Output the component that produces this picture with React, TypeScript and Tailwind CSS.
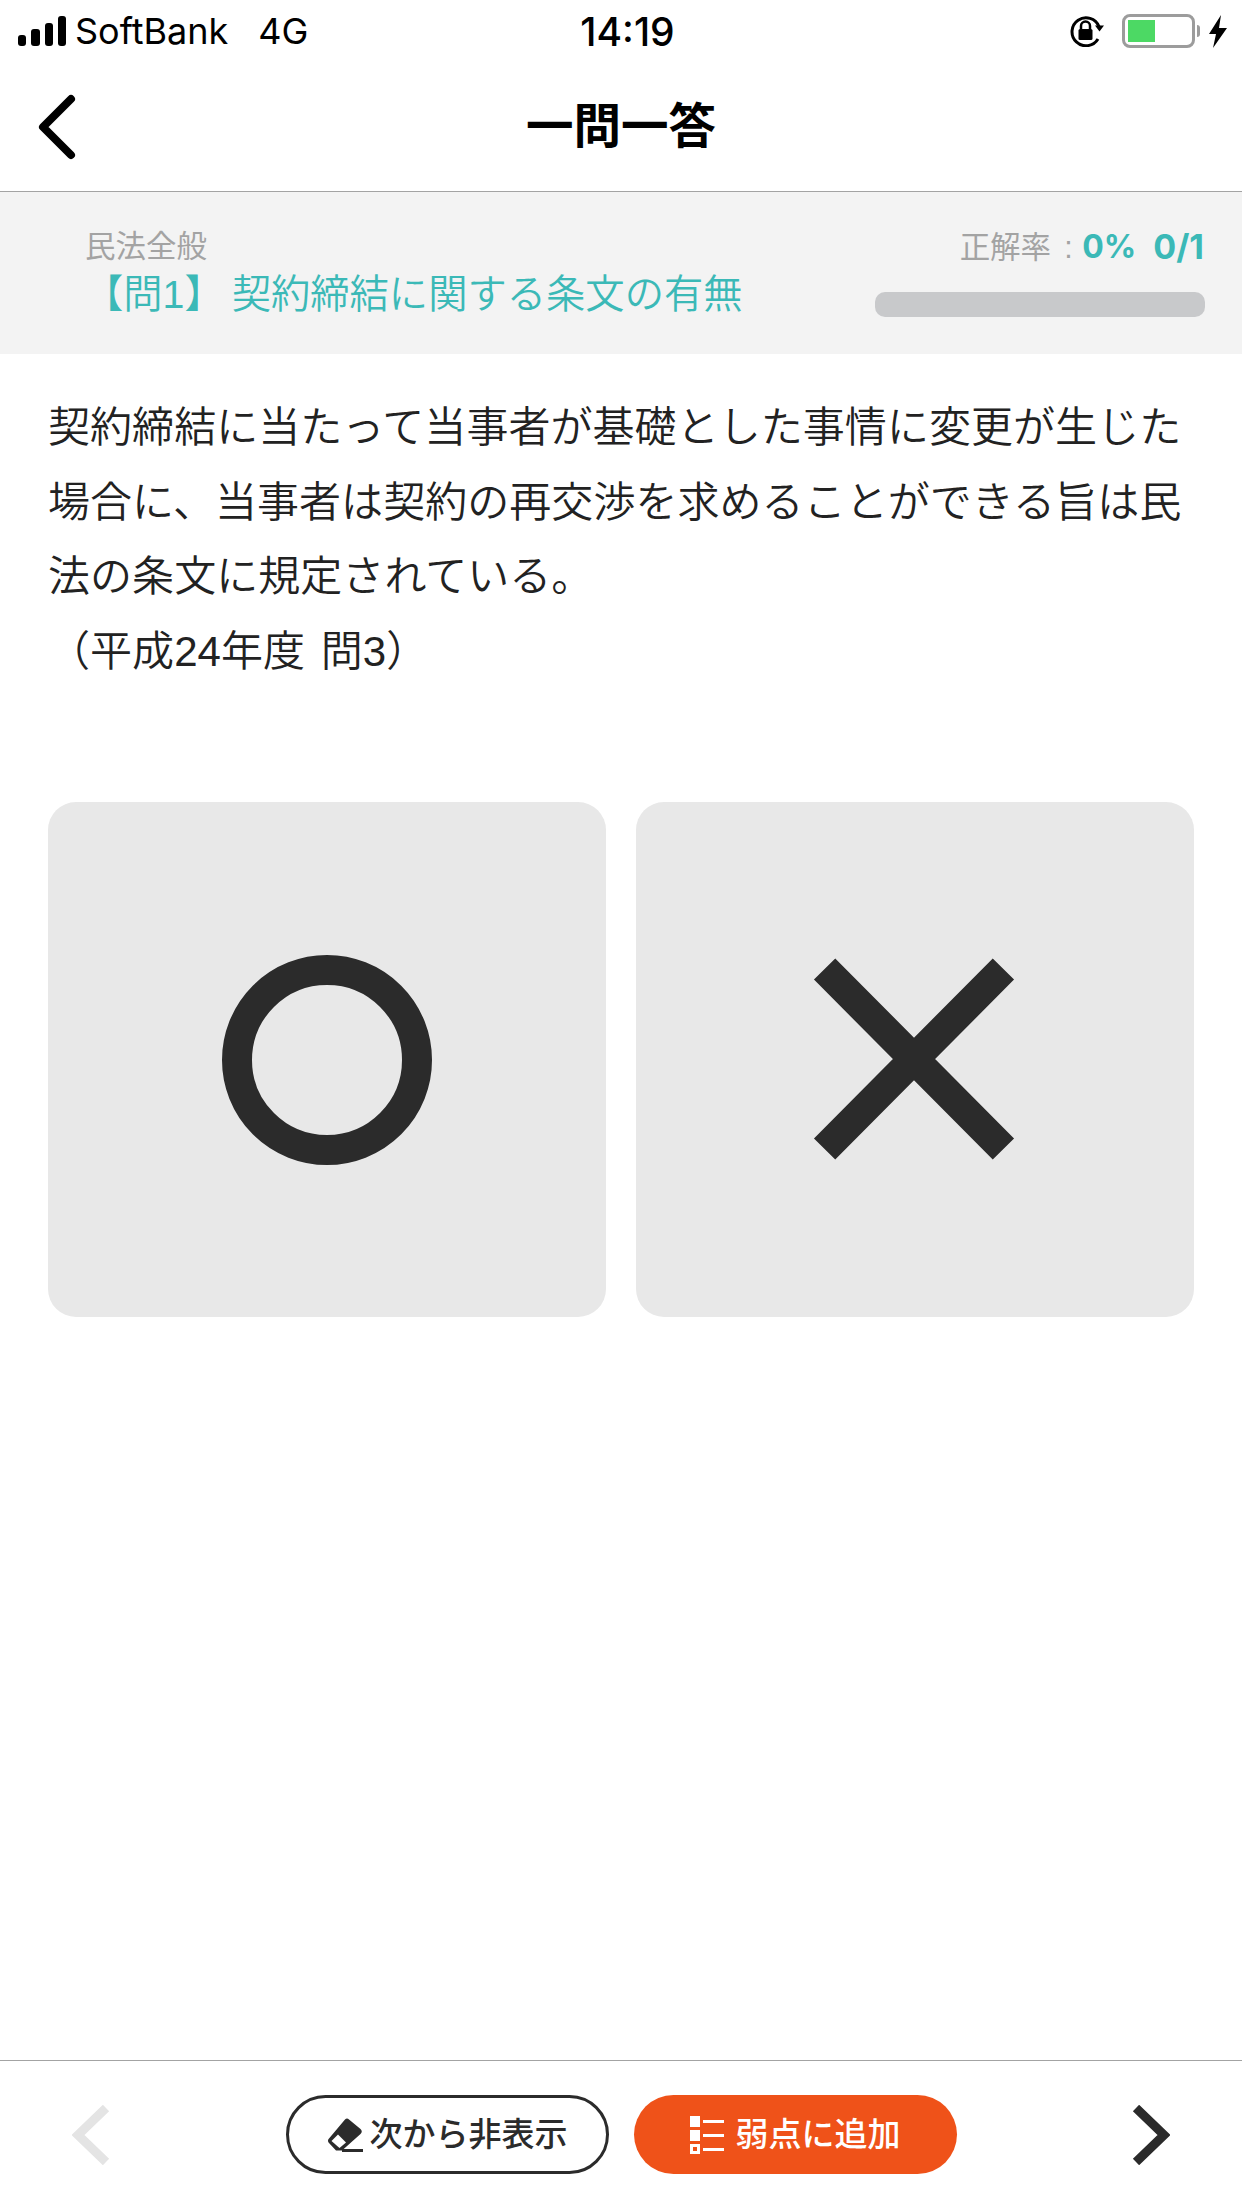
import * as React from "react";

const jp = "font-['Liberation_Sans','Noto_Sans_CJK_JP',sans-serif]";

const StatusBar = () => {
  return (
    <div className="grid h-[62px] grid-cols-[1fr_auto_1fr] items-center pl-[18px] pr-[15px] text-black font-['Inter',sans-serif]">
      <div className="flex items-center">
        <svg width="48" height="30" viewBox="0 0 48 30" fill="#000">
          <rect x="0" y="19" width="8" height="11" rx="3" />
          <rect x="13" y="13" width="9" height="17" rx="3" />
          <rect x="27" y="7" width="8" height="23" rx="3" />
          <rect x="40" y="0" width="8" height="30" rx="3" />
        </svg>
        <span className="ml-[9px] text-[36px] leading-none">SoftBank</span>
        <span className="ml-[30px] text-[36px] leading-none">4G</span>
      </div>
      <div className="ml-[10px] text-[39px] leading-none font-medium">14:19</div>
      <div className="flex items-center justify-end">
        <svg width="34" height="32" viewBox="0 0 34 32" fill="none">
          <path d="M29 11.5A14 14 0 1 0 28 24" stroke="#000" strokeWidth="3" />
          <path d="M25 10.5h9l-4.500 6z" fill="#000" />
          <path d="M11 14v-3a4.500 4.500 0 0 1 9 0v3" stroke="#000" strokeWidth="2.500" />
          <rect x="8.500" y="14" width="14" height="11" rx="1.500" fill="#000" />
        </svg>
        <div className="ml-[18px] mr-[1px] flex h-[34px] w-[73px] rounded-[8px] border-[3px] border-[#9c9c9c] p-[3px]">
          <div className="h-full w-[27px] bg-[#4cd964]" />
        </div>
        <div className="ml-[1px] h-[12px] w-[3px] rounded-r-full bg-[#9c9c9c]" />
        <svg className="ml-[9px]" width="18" height="33" viewBox="0 0 18 33" fill="#000">
          <path d="M12 0 0 19h7L4 33 18 13h-8z" />
        </svg>
      </div>
    </div>
  );
};

const NavBar = () => {
  return (
    <div className="grid h-[130px] grid-cols-[1fr_auto_1fr] items-center border-b-[1px] border-[#a3a3a3]">
      <svg width="38" height="66" viewBox="0 0 38 66" fill="none" className="ml-[38px]">
        <path d="M33 5 5 33l28 28" stroke="#000" strokeWidth="8" strokeLinecap="round" strokeLinejoin="round" />
      </svg>
      <div className={`${jp} text-[47.500px] leading-none font-bold text-black`}>一問一答</div>
      <div />
    </div>
  );
};

const QuestionHead = () => {
  return (
    <div className="flex h-[162px] items-start justify-between bg-[#f3f3f3] pl-[85px] pr-[37px] pt-[37px]">
      <div className={jp}>
        <div className="text-[30.500px] leading-[34px] text-[#a3a3a3]">民法全般</div>
        <div className="-ml-[1px] mt-[7px] whitespace-pre text-[39.300px] font-[350] leading-[48px] text-[#3bb9b7] [word-spacing:-3px]">
          【問1】 契約締結に関する条文の有無
        </div>
      </div>
      <div className="mt-[1px] flex w-[330px] flex-col items-end">
        <div className={`${jp} mr-[1px] flex items-center text-[30.500px] leading-[34px] text-[#a3a3a3]`}>
          <span>正解率</span>
          <span className="ml-[13px] w-[18px]">:</span>
          <span className="font-['Inter',sans-serif] text-[32px] font-bold text-[#3bb9b7]">0%</span>
          <span className="ml-[17px] font-['Inter',sans-serif] text-[34px] font-bold text-[#3bb9b7]">0/1</span>
        </div>
        <div className="mt-[28px] h-[25px] w-full rounded-[10px] bg-[#c8c9cb]" />
      </div>
    </div>
  );
};

const AnswerButtons = () => {
  return (
    <div className="mt-[113px] grid grid-cols-2 gap-[30px] px-[48px]">
      <button className="flex h-[515px] items-center justify-center rounded-[28px] bg-[#e8e8e8]">
        <div className="h-[210px] w-[210px] rounded-full border-[30px] border-[#2b2b2b]" />
      </button>
      <button className="flex h-[515px] items-center justify-center rounded-[28px] bg-[#e8e8e8]">
        <svg width="200" height="202" viewBox="0 0 200 202" fill="none" className="overflow-visible">
          <path d="M9.600 10 188.400 190M188.400 10 9.600 190" stroke="#2b2b2b" strokeWidth="30" />
        </svg>
      </button>
    </div>
  );
};

const BottomBar = () => {
  return (
    <div className="mt-auto flex h-[148px] items-start justify-between border-t-[1px] border-[#a3a3a3] pl-[72px] pr-[72px] pt-[34px]">
      <svg className="mt-[10px]" width="38" height="60" viewBox="0 0 38 60" fill="none">
        <path d="M34 3 6 30l28 27" stroke="#e4e4e4" strokeWidth="9" />
      </svg>
      <div className={`${jp} flex gap-[25px]`}>
        <button className="flex h-[79px] w-[323px] items-center justify-center rounded-full border-[3px] border-[#2b2b2b] bg-white text-[33px] font-medium text-[#2b2b2b]">
          <svg className="mr-[7px]" width="36" height="34" viewBox="0 0 36 34" fill="none">
            <path d="M22 1.500 33.500 11a3.500 3.500 0 0 1 0 5L15 32.500H9L2 25a3 3 0 0 1 0-4.500L18 1.500a3 3 0 0 1 4 0z" fill="#2b2b2b" />
            <path d="M4.500 23 11 16.500 19 24.500 12.500 30z" fill="#fff" />
            <path d="M15 32.500H36" stroke="#2b2b2b" strokeWidth="3" />
          </svg>
          次から非表示
        </button>
        <button className="flex h-[79px] w-[323px] items-center justify-center rounded-full bg-[#ef5219] text-[33px] font-medium text-white">
          <svg className="mr-[12px]" width="34" height="38" viewBox="0 0 34 38" fill="#fff">
            <rect x="0" y="0" width="10" height="11" />
            <rect x="0" y="14" width="10" height="11" />
            <path d="M0 28h10v10H0zm3 3v4h4v-4z" fillRule="evenodd" />
            <rect x="13" y="4" width="21" height="3" />
            <rect x="13" y="18" width="21" height="3" />
            <rect x="13" y="32" width="21" height="3" />
          </svg>
          弱点に追加
        </button>
      </div>
      <svg className="mt-[10px]" width="38" height="60" viewBox="0 0 38 60" fill="none">
        <path d="M4 3 32 30 4 57" stroke="#2b2b2b" strokeWidth="9" />
      </svg>
    </div>
  );
};

const App = () => {
  return (
    <div className="flex h-[2208px] w-[1242px] flex-col overflow-hidden bg-white">
      <StatusBar />
      <NavBar />
      <QuestionHead />
      <div className={`${jp} px-[48px] pt-[37px] text-[42px] font-[350] leading-[74.500px] tracking-[0.05px] text-[#222222]`}>
        契約締結に当たって当事者が基礎とした事情に変更が生じた場合に、当事者は契約の再交渉を求めることができる旨は民法の条文に規定されている。
        <br />
        <span className="[word-spacing:4px]">（平成24年度 問3）</span>
      </div>
      <AnswerButtons />
      <BottomBar />
    </div>
  );
};

export default App;
